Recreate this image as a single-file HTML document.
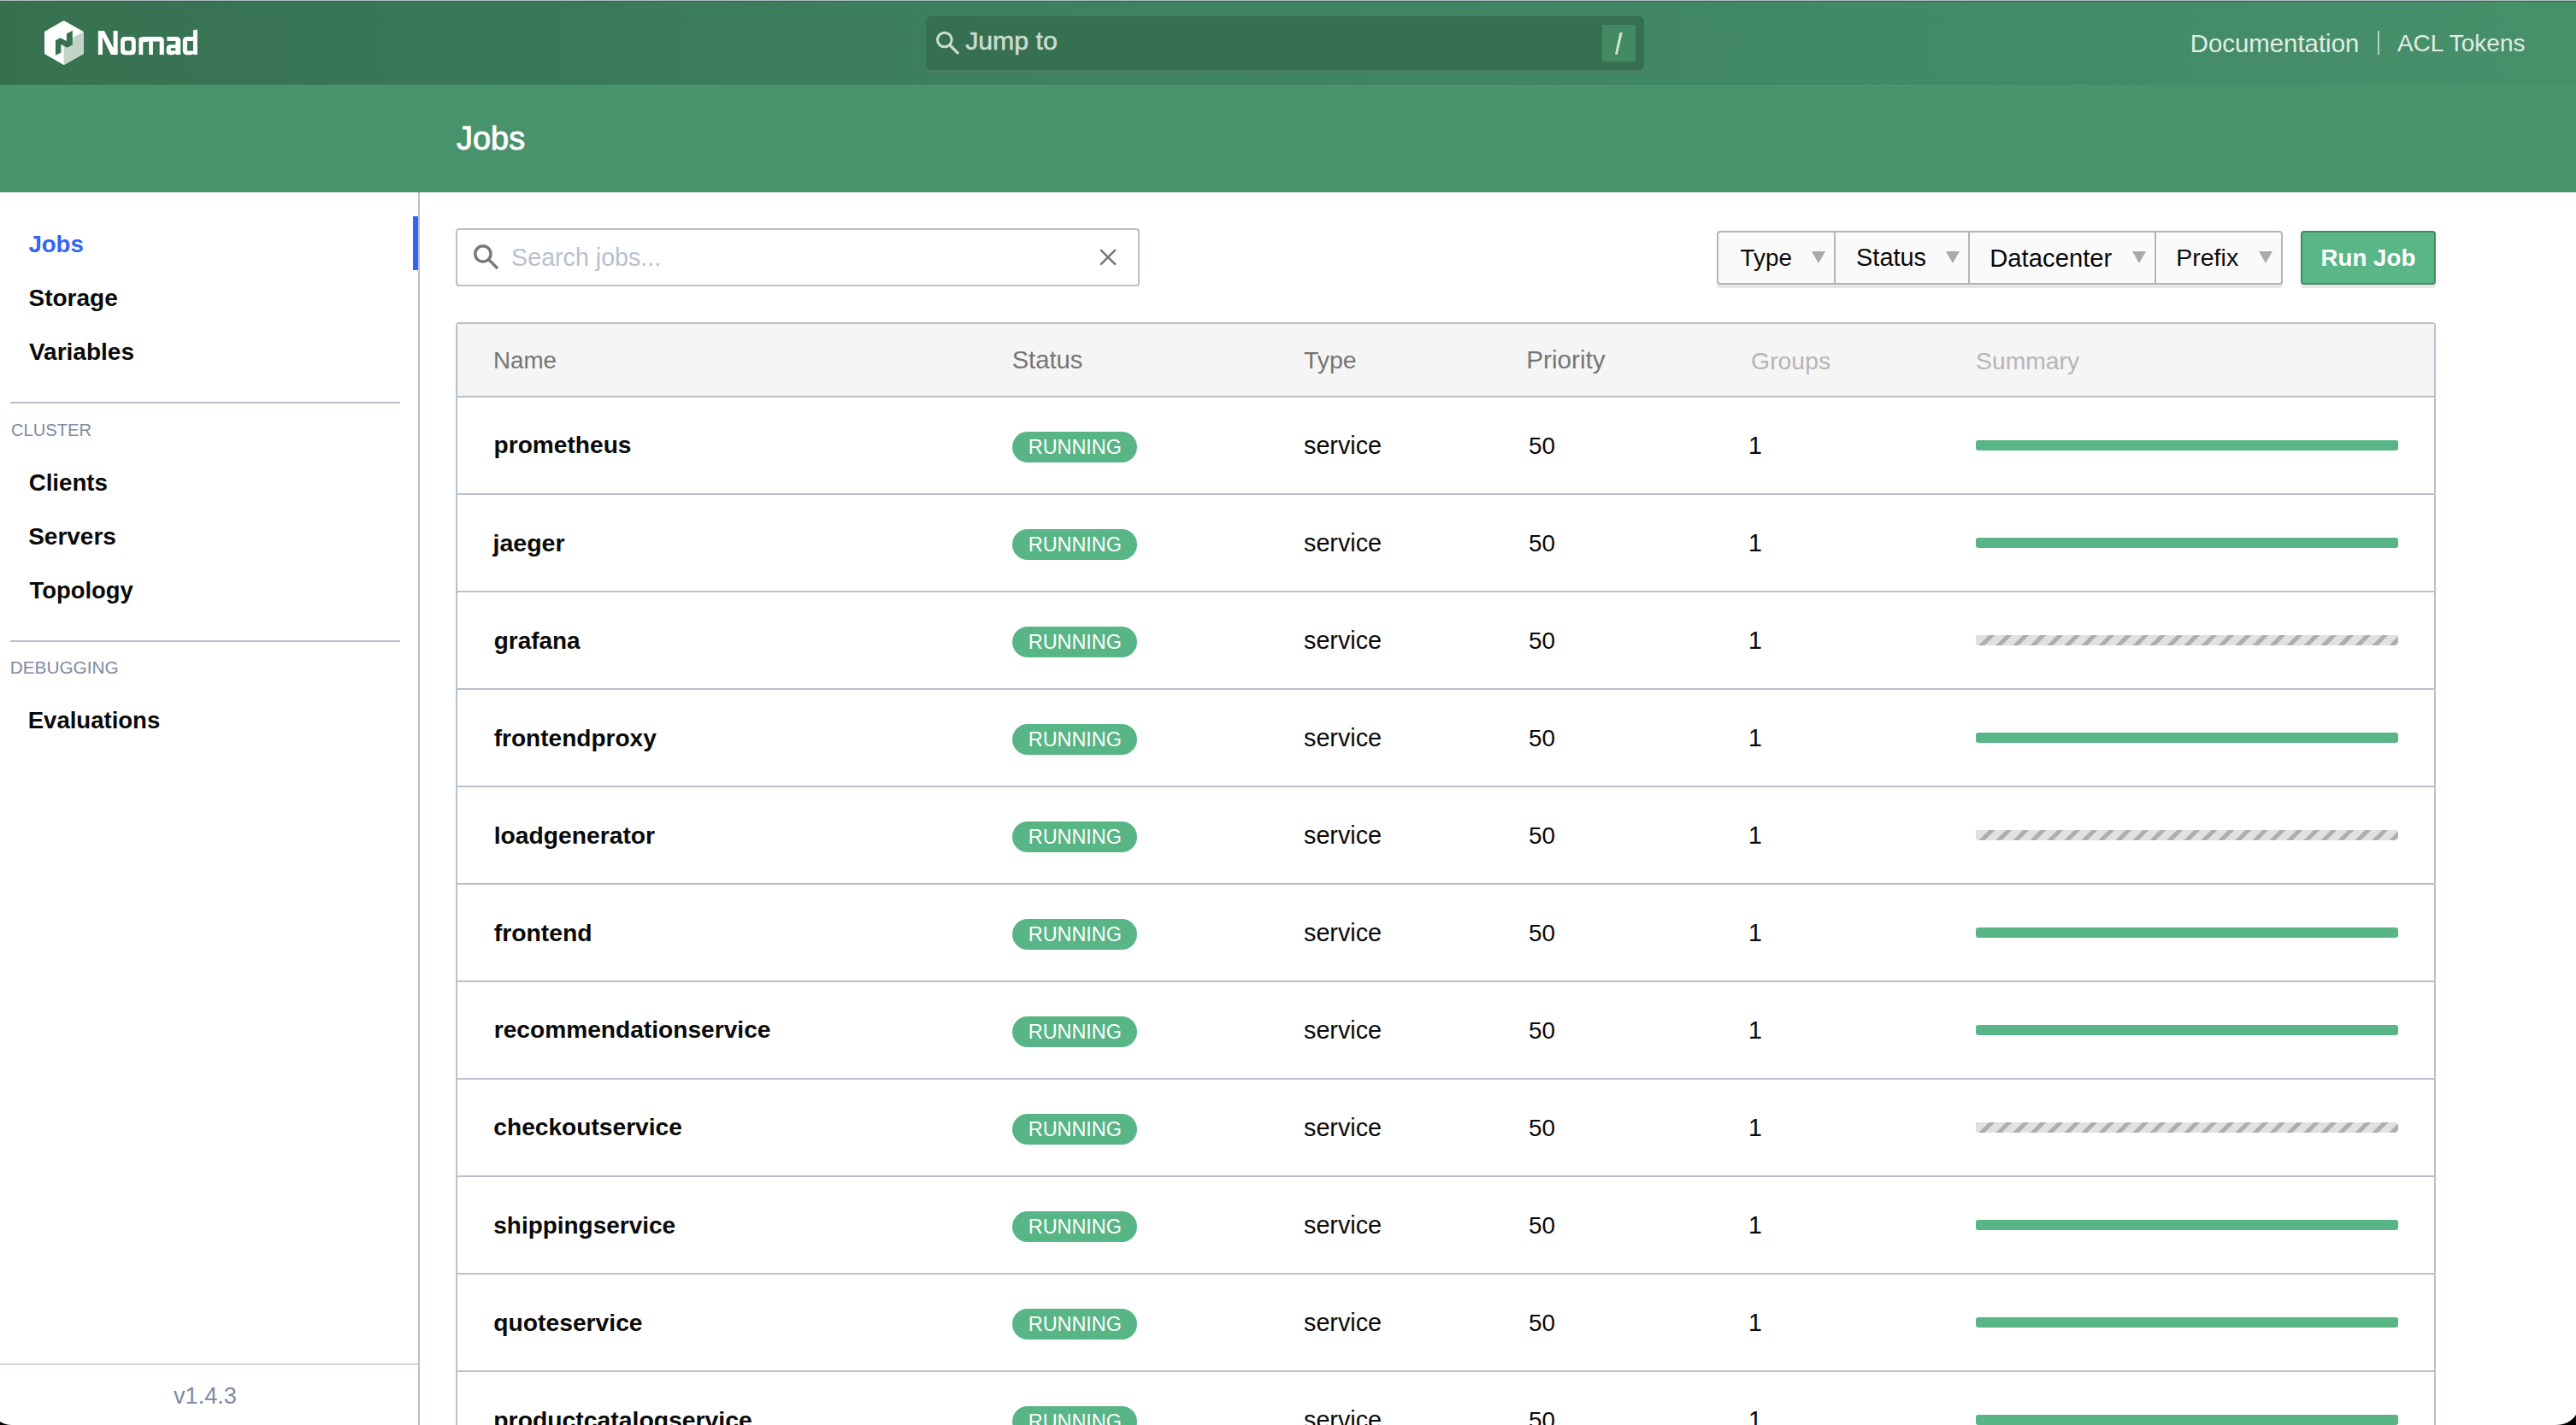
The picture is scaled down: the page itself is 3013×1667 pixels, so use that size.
<!DOCTYPE html>
<html><head><meta charset="utf-8"><title>Jobs - Nomad</title>
<style>
html,body{margin:0;padding:0;}
body{width:3013px;height:1667px;overflow:hidden;position:relative;background:#fff;font-family:"Liberation Sans",sans-serif;}
.t{position:absolute;line-height:1;white-space:nowrap;}
</style></head><body>
<div style="position:absolute;left:0px;top:0px;width:3013px;height:99px;background:linear-gradient(to right,#36704f 0%,#3d8160 40%,#46906a 100%)"></div>
<div style="position:absolute;left:0px;top:98px;width:3013px;height:1px;background:rgba(0,0,0,0.04)"></div>
<div style="position:absolute;left:0px;top:0px;width:3013px;height:1px;background:#aebdc4"></div>
<div style="position:absolute;left:0px;top:1px;width:3013px;height:1px;background:#2f6b4b"></div>
<svg style="position:absolute;left:0;top:0" width="260" height="98" viewBox="0 0 260 98">
<polygon points="74.6,24 97.7,37 97.7,63.1 74.6,76 52,63.1 52,37" fill="#ffffff"/>
<polygon points="74.6,50 97.7,37 97.7,63.1 74.6,76" fill="#c2d4c8"/>
<polygon points="64.9,47.2 70.6,44.2 77.9,48 77.9,39.5 84.8,35.8 84.8,52.5 78.7,55.8 71.4,52.1 71.4,61.5 64.9,64.7" fill="#37714f"/>
</svg>
<svg style="position:absolute;left:0;top:0" width="260" height="98" viewBox="0 0 260 98">
<path fill="#fff" d="M114.85,36.07 L121.89,36.07 L132.56,56.45 L132.56,36.07 L137.66,36.07 L137.66,63.97 L129.9,63.97 L119.95,43.59 L119.95,63.97 L114.85,63.97 Z"/>
<path fill="#fff" fill-rule="evenodd" d="M146,43.1 L153.9,43.1 Q158.77,43.1 158.77,48 L158.77,59.3 Q158.77,64.21 153.9,64.21 L146,64.21 Q141.06,64.21 141.06,59.3 L141.06,48 Q141.06,43.1 146,43.1 Z M148.3,47.47 L151.5,47.47 Q153.9,47.47 153.9,49.9 L153.9,57.2 Q153.9,59.6 151.5,59.6 L148.3,59.6 Q145.9,59.6 145.9,57.2 L145.9,49.9 Q145.9,47.47 148.3,47.47 Z"/>
<path fill="#fff" d="M162.4,44.3 L167.3,43.1 L187.2,43.1 Q191.77,43.1 191.77,47.8 L191.77,63.97 L186.67,63.97 L186.67,48.44 L178.9,48.44 L178.9,63.97 L174.3,63.97 L174.3,48.44 L167.26,49.5 L167.26,63.97 L162.4,63.97 Z"/>
<path fill="#fff" fill-rule="evenodd" d="M195.4,43.1 L206.4,43.1 Q211.17,43.1 211.17,47.9 L211.17,63.97 L205.6,63.97 L205.35,62.8 Q203.8,64.21 200.5,64.21 L199.4,64.21 Q194.67,64.21 194.67,59.5 L194.67,57 Q194.67,52.3 199.4,52.3 L205.35,52.3 L205.35,47.95 L195.4,47.95 Z M199.8,56.2 L205.35,56.2 L205.35,59.35 L199.8,59.35 Z"/>
<path fill="#fff" fill-rule="evenodd" d="M218.7,43.1 L225.97,43.1 L225.97,35.3 L230.83,34.6 L230.83,63.97 L226.2,63.97 L225.97,62.9 Q224.3,64.21 221,64.21 L218.7,64.21 Q213.84,64.21 213.84,59.3 L213.84,48 Q213.84,43.1 218.7,43.1 Z M218.94,47.95 L225.97,47.95 L225.97,59.6 L218.94,59.6 Z"/>
</svg>
<div style="position:absolute;left:1083px;top:19px;width:840px;height:66px;background:#4a7f66;border-radius:6px"></div>
<div style="position:absolute;left:1083px;top:19px;width:840px;height:62.5px;background:#376f52;border-radius:6px"></div>
<svg style="position:absolute;left:1090px;top:30px" width="40" height="40" viewBox="1090 30 40 40">
<circle cx="1104.8" cy="46.5" r="8.3" fill="none" stroke="#c9ddd0" stroke-width="3"/>
<line x1="1110.8" y1="52.5" x2="1121" y2="62.8" stroke="#c9ddd0" stroke-width="3.2"/>
</svg>
<div class="t" style="left:1129.15px;top:33.20px;font-size:30.25px;color:#c9ddd0;font-weight:400;-webkit-text-stroke:0.6px #c9ddd0">Jump to</div>
<div style="position:absolute;left:1874px;top:29px;width:39px;height:43px;background:#438a63"></div>
<svg style="position:absolute;left:1874px;top:29px" width="39" height="43" viewBox="1874 29 39 43">
<polygon points="1894.6,38.06 1897.7,38.06 1891.85,63.87 1889.0,63.87" fill="#d5e3da"/>
</svg>
<div class="t" style="left:2561.67px;top:35.52px;font-size:29.40px;color:#e0ece4;font-weight:400;">Documentation</div>
<div style="position:absolute;left:2781px;top:36px;width:2px;height:28px;background:#b3d3c0"></div>
<div class="t" style="left:2803.90px;top:36.66px;font-size:28.05px;color:#e0ece4;font-weight:400;">ACL Tokens</div>
<div style="position:absolute;left:0px;top:99px;width:3013px;height:126px;background:#48936b"></div>
<div style="position:absolute;left:0px;top:99px;width:3013px;height:1px;background:#4a976d"></div>
<div class="t" style="left:533.97px;top:143.78px;font-size:37.95px;color:#ffffff;font-weight:400;-webkit-text-stroke:0.9px #fff">Jobs</div>
<div style="position:absolute;left:489px;top:225px;width:2px;height:1442px;background:#b9c0cd"></div>
<div class="t" style="left:33.47px;top:272.28px;font-size:27.55px;color:#3264f5;font-weight:700;">Jobs</div>
<div style="position:absolute;left:483px;top:253px;width:6px;height:63px;background:#3264f5"></div>
<div class="t" style="left:33.47px;top:334.90px;font-size:28.00px;color:#0a0a0a;font-weight:700;">Storage</div>
<div class="t" style="left:33.97px;top:397.90px;font-size:28.00px;color:#0a0a0a;font-weight:700;">Variables</div>
<div style="position:absolute;left:12px;top:470px;width:456px;height:2px;background:#b9c0cd"></div>
<div class="t" style="left:13.00px;top:492.55px;font-size:20.15px;color:#7d8ba2;font-weight:400;">CLUSTER</div>
<div class="t" style="left:33.66px;top:550.96px;font-size:27.70px;color:#0a0a0a;font-weight:700;">Clients</div>
<div class="t" style="left:33.16px;top:613.90px;font-size:28.00px;color:#0a0a0a;font-weight:700;">Servers</div>
<div class="t" style="left:34.56px;top:677.39px;font-size:27.42px;color:#0a0a0a;font-weight:700;">Topology</div>
<div style="position:absolute;left:12px;top:749px;width:456px;height:2px;background:#b9c0cd"></div>
<div class="t" style="left:11.76px;top:771.01px;font-size:20.78px;color:#7d8ba2;font-weight:400;">DEBUGGING</div>
<div class="t" style="left:32.76px;top:829.30px;font-size:27.53px;color:#0a0a0a;font-weight:700;">Evaluations</div>
<div style="position:absolute;left:0px;top:1595px;width:489px;height:2px;background:#cfd5e0"></div>
<div class="t" style="left:203.00px;top:1619.34px;font-size:27.12px;color:#7d8ba2;font-weight:400;">v1.4.3</div>
<div style="position:absolute;left:533px;top:267px;width:800px;height:68px;box-sizing:border-box;border:2px solid #b9c0cd;border-radius:4px;background:#fff"></div>
<svg style="position:absolute;left:550px;top:282px" width="40" height="40" viewBox="550 282 40 40">
<circle cx="564.9" cy="296.9" r="9.1" fill="none" stroke="#777" stroke-width="3.4"/>
<line x1="571.6" y1="303.6" x2="582" y2="314" stroke="#777" stroke-width="3.4"/>
</svg>
<div class="t" style="left:598.10px;top:287.35px;font-size:28.65px;color:#b9c0cd;font-weight:400;">Search jobs...</div>
<svg style="position:absolute;left:1280px;top:286px" width="32" height="30" viewBox="1280 286 32 30">
<line x1="1287.9" y1="292.8" x2="1304.1" y2="308.9" stroke="#777" stroke-width="2.6" stroke-linecap="round"/>
<line x1="1304.1" y1="292.8" x2="1287.9" y2="308.9" stroke="#777" stroke-width="2.6" stroke-linecap="round"/>
</svg>
<div style="position:absolute;left:2008px;top:274px;width:662px;height:63px;background:#e6e6e6;border-radius:4px"></div>
<div style="position:absolute;left:2008px;top:270px;width:662px;height:63px;box-sizing:border-box;border:2px solid #b5b5b5;border-radius:4px;background:#fafafa"></div>
<div style="position:absolute;left:2145px;top:272px;width:2px;height:59px;background:#b5b5b5"></div>
<div style="position:absolute;left:2302px;top:272px;width:2px;height:59px;background:#b5b5b5"></div>
<div style="position:absolute;left:2520px;top:272px;width:2px;height:59px;background:#b5b5b5"></div>
<div class="t" style="left:2035.56px;top:287.73px;font-size:27.85px;color:#0a0a0a;font-weight:400;">Type</div>
<div class="t" style="left:2171.10px;top:286.83px;font-size:28.91px;color:#0a0a0a;font-weight:400;">Status</div>
<div class="t" style="left:2327.20px;top:286.52px;font-size:29.28px;color:#0a0a0a;font-weight:400;">Datacenter</div>
<div class="t" style="left:2545.20px;top:287.12px;font-size:28.56px;color:#0a0a0a;font-weight:400;">Prefix</div>
<svg style="position:absolute;left:0;top:0" width="3013" height="340" viewBox="0 0 3013 340"><polygon points="2119,294 2135,294 2127,308" fill="#aaaaaa"/><polygon points="2276,294 2292,294 2284,308" fill="#aaaaaa"/><polygon points="2494,294 2510,294 2502,308" fill="#aaaaaa"/><polygon points="2642,294 2658,294 2650,308" fill="#aaaaaa"/></svg>
<div style="position:absolute;left:2691px;top:274px;width:158px;height:63px;background:#e6e6e6;border-radius:4px"></div>
<div style="position:absolute;left:2691px;top:270px;width:158px;height:63px;box-sizing:border-box;border:2px solid #3f8c60;border-radius:4px;background:#5ab686"></div>
<div class="t" style="left:2714.54px;top:287.85px;font-size:27.71px;color:#ffffff;font-weight:700;">Run Job</div>
<div style="position:absolute;left:533px;top:377px;width:2316px;height:1300px;box-sizing:border-box;border:2px solid #b9c0cd;border-radius:4px;background:#fff"></div>
<div style="position:absolute;left:535px;top:379px;width:2312px;height:84px;background:#f5f5f5"></div>
<div style="position:absolute;left:535px;top:463px;width:2312px;height:2px;background:#b9c0cd"></div>
<div class="t" style="left:576.89px;top:407.98px;font-size:27.79px;color:#757575;font-weight:400;">Name</div>
<div class="t" style="left:1183.66px;top:406.80px;font-size:29.18px;color:#757575;font-weight:400;">Status</div>
<div class="t" style="left:1525.00px;top:407.42px;font-size:28.45px;color:#757575;font-weight:400;">Type</div>
<div class="t" style="left:1785.20px;top:406.36px;font-size:29.71px;color:#757575;font-weight:400;">Priority</div>
<div class="t" style="left:2048.10px;top:407.50px;font-size:28.36px;color:#b5b5b5;font-weight:400;">Groups</div>
<div class="t" style="left:2311.10px;top:407.56px;font-size:28.29px;color:#b5b5b5;font-weight:400;">Summary</div>
<div class="t" style="left:577.54px;top:507.49px;font-size:28.13px;color:#0a0a0a;font-weight:700;">prometheus</div>
<div style="position:absolute;left:1184px;top:505px;width:146px;height:36px;background:#58b585;border-radius:18px"></div>
<div class="t" style="left:1202.76px;top:511.69px;font-size:23.41px;color:#ffffff;font-weight:400;">RUNNING</div>
<div class="t" style="left:1525.00px;top:507.27px;font-size:28.75px;color:#0a0a0a;font-weight:400;">service</div>
<div class="t" style="left:1788.00px;top:508.03px;font-size:27.85px;color:#0a0a0a;font-weight:400;">50</div>
<div class="t" style="left:2044.96px;top:507.39px;font-size:28.60px;color:#0a0a0a;font-weight:400;">1</div>
<div style="position:absolute;left:2311px;top:515px;width:494px;height:12px;border-radius:3px;background:#58b585"></div>
<div style="position:absolute;left:535px;top:577px;width:2312px;height:2px;background:#b9c0cd"></div>
<div class="t" style="left:576.50px;top:621.14px;font-size:28.55px;color:#0a0a0a;font-weight:700;">jaeger</div>
<div style="position:absolute;left:1184px;top:619px;width:146px;height:36px;background:#58b585;border-radius:18px"></div>
<div class="t" style="left:1202.76px;top:625.69px;font-size:23.41px;color:#ffffff;font-weight:400;">RUNNING</div>
<div class="t" style="left:1525.00px;top:621.27px;font-size:28.75px;color:#0a0a0a;font-weight:400;">service</div>
<div class="t" style="left:1788.00px;top:622.03px;font-size:27.85px;color:#0a0a0a;font-weight:400;">50</div>
<div class="t" style="left:2044.96px;top:621.39px;font-size:28.60px;color:#0a0a0a;font-weight:400;">1</div>
<div style="position:absolute;left:2311px;top:629px;width:494px;height:12px;border-radius:3px;background:#58b585"></div>
<div style="position:absolute;left:535px;top:691px;width:2312px;height:2px;background:#b9c0cd"></div>
<div class="t" style="left:577.70px;top:735.64px;font-size:27.95px;color:#0a0a0a;font-weight:700;">grafana</div>
<div style="position:absolute;left:1184px;top:733px;width:146px;height:36px;background:#58b585;border-radius:18px"></div>
<div class="t" style="left:1202.76px;top:739.69px;font-size:23.41px;color:#ffffff;font-weight:400;">RUNNING</div>
<div class="t" style="left:1525.00px;top:735.27px;font-size:28.75px;color:#0a0a0a;font-weight:400;">service</div>
<div class="t" style="left:1788.00px;top:736.03px;font-size:27.85px;color:#0a0a0a;font-weight:400;">50</div>
<div class="t" style="left:2044.96px;top:735.39px;font-size:28.60px;color:#0a0a0a;font-weight:400;">1</div>
<div style="position:absolute;left:2311px;top:743px;width:494px;height:12px;border-radius:3px;overflow:hidden;background:#e1e1e1"><svg width="494" height="12" style="display:block"><polygon points="-4.70,0 2.40,0 -9.60,12 -16.70,12" fill="#aeaeae"/><polygon points="15.30,0 22.40,0 10.40,12 3.30,12" fill="#aeaeae"/><polygon points="35.30,0 42.40,0 30.40,12 23.30,12" fill="#aeaeae"/><polygon points="55.30,0 62.40,0 50.40,12 43.30,12" fill="#aeaeae"/><polygon points="75.30,0 82.40,0 70.40,12 63.30,12" fill="#aeaeae"/><polygon points="95.30,0 102.40,0 90.40,12 83.30,12" fill="#aeaeae"/><polygon points="115.30,0 122.40,0 110.40,12 103.30,12" fill="#aeaeae"/><polygon points="135.30,0 142.40,0 130.40,12 123.30,12" fill="#aeaeae"/><polygon points="155.30,0 162.40,0 150.40,12 143.30,12" fill="#aeaeae"/><polygon points="175.30,0 182.40,0 170.40,12 163.30,12" fill="#aeaeae"/><polygon points="195.30,0 202.40,0 190.40,12 183.30,12" fill="#aeaeae"/><polygon points="215.30,0 222.40,0 210.40,12 203.30,12" fill="#aeaeae"/><polygon points="235.30,0 242.40,0 230.40,12 223.30,12" fill="#aeaeae"/><polygon points="255.30,0 262.40,0 250.40,12 243.30,12" fill="#aeaeae"/><polygon points="275.30,0 282.40,0 270.40,12 263.30,12" fill="#aeaeae"/><polygon points="295.30,0 302.40,0 290.40,12 283.30,12" fill="#aeaeae"/><polygon points="315.30,0 322.40,0 310.40,12 303.30,12" fill="#aeaeae"/><polygon points="335.30,0 342.40,0 330.40,12 323.30,12" fill="#aeaeae"/><polygon points="355.30,0 362.40,0 350.40,12 343.30,12" fill="#aeaeae"/><polygon points="375.30,0 382.40,0 370.40,12 363.30,12" fill="#aeaeae"/><polygon points="395.30,0 402.40,0 390.40,12 383.30,12" fill="#aeaeae"/><polygon points="415.30,0 422.40,0 410.40,12 403.30,12" fill="#aeaeae"/><polygon points="435.30,0 442.40,0 430.40,12 423.30,12" fill="#aeaeae"/><polygon points="455.30,0 462.40,0 450.40,12 443.30,12" fill="#aeaeae"/><polygon points="475.30,0 482.40,0 470.40,12 463.30,12" fill="#aeaeae"/><polygon points="495.30,0 502.40,0 490.40,12 483.30,12" fill="#aeaeae"/><polygon points="515.30,0 522.40,0 510.40,12 503.30,12" fill="#aeaeae"/><polygon points="535.30,0 542.40,0 530.40,12 523.30,12" fill="#aeaeae"/></svg></div>
<div style="position:absolute;left:535px;top:805px;width:2312px;height:2px;background:#b9c0cd"></div>
<div class="t" style="left:577.70px;top:849.56px;font-size:28.05px;color:#0a0a0a;font-weight:700;">frontendproxy</div>
<div style="position:absolute;left:1184px;top:847px;width:146px;height:36px;background:#58b585;border-radius:18px"></div>
<div class="t" style="left:1202.76px;top:853.69px;font-size:23.41px;color:#ffffff;font-weight:400;">RUNNING</div>
<div class="t" style="left:1525.00px;top:849.27px;font-size:28.75px;color:#0a0a0a;font-weight:400;">service</div>
<div class="t" style="left:1788.00px;top:850.03px;font-size:27.85px;color:#0a0a0a;font-weight:400;">50</div>
<div class="t" style="left:2044.96px;top:849.39px;font-size:28.60px;color:#0a0a0a;font-weight:400;">1</div>
<div style="position:absolute;left:2311px;top:857px;width:494px;height:12px;border-radius:3px;background:#58b585"></div>
<div style="position:absolute;left:535px;top:919px;width:2312px;height:2px;background:#b9c0cd"></div>
<div class="t" style="left:577.70px;top:963.39px;font-size:28.25px;color:#0a0a0a;font-weight:700;">loadgenerator</div>
<div style="position:absolute;left:1184px;top:961px;width:146px;height:36px;background:#58b585;border-radius:18px"></div>
<div class="t" style="left:1202.76px;top:967.69px;font-size:23.41px;color:#ffffff;font-weight:400;">RUNNING</div>
<div class="t" style="left:1525.00px;top:963.27px;font-size:28.75px;color:#0a0a0a;font-weight:400;">service</div>
<div class="t" style="left:1788.00px;top:964.03px;font-size:27.85px;color:#0a0a0a;font-weight:400;">50</div>
<div class="t" style="left:2044.96px;top:963.39px;font-size:28.60px;color:#0a0a0a;font-weight:400;">1</div>
<div style="position:absolute;left:2311px;top:971px;width:494px;height:12px;border-radius:3px;overflow:hidden;background:#e1e1e1"><svg width="494" height="12" style="display:block"><polygon points="-4.70,0 2.40,0 -9.60,12 -16.70,12" fill="#aeaeae"/><polygon points="15.30,0 22.40,0 10.40,12 3.30,12" fill="#aeaeae"/><polygon points="35.30,0 42.40,0 30.40,12 23.30,12" fill="#aeaeae"/><polygon points="55.30,0 62.40,0 50.40,12 43.30,12" fill="#aeaeae"/><polygon points="75.30,0 82.40,0 70.40,12 63.30,12" fill="#aeaeae"/><polygon points="95.30,0 102.40,0 90.40,12 83.30,12" fill="#aeaeae"/><polygon points="115.30,0 122.40,0 110.40,12 103.30,12" fill="#aeaeae"/><polygon points="135.30,0 142.40,0 130.40,12 123.30,12" fill="#aeaeae"/><polygon points="155.30,0 162.40,0 150.40,12 143.30,12" fill="#aeaeae"/><polygon points="175.30,0 182.40,0 170.40,12 163.30,12" fill="#aeaeae"/><polygon points="195.30,0 202.40,0 190.40,12 183.30,12" fill="#aeaeae"/><polygon points="215.30,0 222.40,0 210.40,12 203.30,12" fill="#aeaeae"/><polygon points="235.30,0 242.40,0 230.40,12 223.30,12" fill="#aeaeae"/><polygon points="255.30,0 262.40,0 250.40,12 243.30,12" fill="#aeaeae"/><polygon points="275.30,0 282.40,0 270.40,12 263.30,12" fill="#aeaeae"/><polygon points="295.30,0 302.40,0 290.40,12 283.30,12" fill="#aeaeae"/><polygon points="315.30,0 322.40,0 310.40,12 303.30,12" fill="#aeaeae"/><polygon points="335.30,0 342.40,0 330.40,12 323.30,12" fill="#aeaeae"/><polygon points="355.30,0 362.40,0 350.40,12 343.30,12" fill="#aeaeae"/><polygon points="375.30,0 382.40,0 370.40,12 363.30,12" fill="#aeaeae"/><polygon points="395.30,0 402.40,0 390.40,12 383.30,12" fill="#aeaeae"/><polygon points="415.30,0 422.40,0 410.40,12 403.30,12" fill="#aeaeae"/><polygon points="435.30,0 442.40,0 430.40,12 423.30,12" fill="#aeaeae"/><polygon points="455.30,0 462.40,0 450.40,12 443.30,12" fill="#aeaeae"/><polygon points="475.30,0 482.40,0 470.40,12 463.30,12" fill="#aeaeae"/><polygon points="495.30,0 502.40,0 490.40,12 483.30,12" fill="#aeaeae"/><polygon points="515.30,0 522.40,0 510.40,12 503.30,12" fill="#aeaeae"/><polygon points="535.30,0 542.40,0 530.40,12 523.30,12" fill="#aeaeae"/></svg></div>
<div style="position:absolute;left:535px;top:1033px;width:2312px;height:2px;background:#b9c0cd"></div>
<div class="t" style="left:577.70px;top:1077.30px;font-size:28.35px;color:#0a0a0a;font-weight:700;">frontend</div>
<div style="position:absolute;left:1184px;top:1075px;width:146px;height:36px;background:#58b585;border-radius:18px"></div>
<div class="t" style="left:1202.76px;top:1081.69px;font-size:23.41px;color:#ffffff;font-weight:400;">RUNNING</div>
<div class="t" style="left:1525.00px;top:1077.27px;font-size:28.75px;color:#0a0a0a;font-weight:400;">service</div>
<div class="t" style="left:1788.00px;top:1078.03px;font-size:27.85px;color:#0a0a0a;font-weight:400;">50</div>
<div class="t" style="left:2044.96px;top:1077.39px;font-size:28.60px;color:#0a0a0a;font-weight:400;">1</div>
<div style="position:absolute;left:2311px;top:1085px;width:494px;height:12px;border-radius:3px;background:#58b585"></div>
<div style="position:absolute;left:535px;top:1147px;width:2312px;height:2px;background:#b9c0cd"></div>
<div class="t" style="left:577.70px;top:1191.47px;font-size:28.15px;color:#0a0a0a;font-weight:700;">recommendationservice</div>
<div style="position:absolute;left:1184px;top:1189px;width:146px;height:36px;background:#58b585;border-radius:18px"></div>
<div class="t" style="left:1202.76px;top:1195.69px;font-size:23.41px;color:#ffffff;font-weight:400;">RUNNING</div>
<div class="t" style="left:1525.00px;top:1191.27px;font-size:28.75px;color:#0a0a0a;font-weight:400;">service</div>
<div class="t" style="left:1788.00px;top:1192.03px;font-size:27.85px;color:#0a0a0a;font-weight:400;">50</div>
<div class="t" style="left:2044.96px;top:1191.39px;font-size:28.60px;color:#0a0a0a;font-weight:400;">1</div>
<div style="position:absolute;left:2311px;top:1199px;width:494px;height:12px;border-radius:3px;background:#58b585"></div>
<div style="position:absolute;left:535px;top:1261px;width:2312px;height:2px;background:#b9c0cd"></div>
<div class="t" style="left:577.30px;top:1305.47px;font-size:28.15px;color:#0a0a0a;font-weight:700;">checkoutservice</div>
<div style="position:absolute;left:1184px;top:1303px;width:146px;height:36px;background:#58b585;border-radius:18px"></div>
<div class="t" style="left:1202.76px;top:1309.69px;font-size:23.41px;color:#ffffff;font-weight:400;">RUNNING</div>
<div class="t" style="left:1525.00px;top:1305.27px;font-size:28.75px;color:#0a0a0a;font-weight:400;">service</div>
<div class="t" style="left:1788.00px;top:1306.03px;font-size:27.85px;color:#0a0a0a;font-weight:400;">50</div>
<div class="t" style="left:2044.96px;top:1305.39px;font-size:28.60px;color:#0a0a0a;font-weight:400;">1</div>
<div style="position:absolute;left:2311px;top:1313px;width:494px;height:12px;border-radius:3px;overflow:hidden;background:#e1e1e1"><svg width="494" height="12" style="display:block"><polygon points="-4.70,0 2.40,0 -9.60,12 -16.70,12" fill="#aeaeae"/><polygon points="15.30,0 22.40,0 10.40,12 3.30,12" fill="#aeaeae"/><polygon points="35.30,0 42.40,0 30.40,12 23.30,12" fill="#aeaeae"/><polygon points="55.30,0 62.40,0 50.40,12 43.30,12" fill="#aeaeae"/><polygon points="75.30,0 82.40,0 70.40,12 63.30,12" fill="#aeaeae"/><polygon points="95.30,0 102.40,0 90.40,12 83.30,12" fill="#aeaeae"/><polygon points="115.30,0 122.40,0 110.40,12 103.30,12" fill="#aeaeae"/><polygon points="135.30,0 142.40,0 130.40,12 123.30,12" fill="#aeaeae"/><polygon points="155.30,0 162.40,0 150.40,12 143.30,12" fill="#aeaeae"/><polygon points="175.30,0 182.40,0 170.40,12 163.30,12" fill="#aeaeae"/><polygon points="195.30,0 202.40,0 190.40,12 183.30,12" fill="#aeaeae"/><polygon points="215.30,0 222.40,0 210.40,12 203.30,12" fill="#aeaeae"/><polygon points="235.30,0 242.40,0 230.40,12 223.30,12" fill="#aeaeae"/><polygon points="255.30,0 262.40,0 250.40,12 243.30,12" fill="#aeaeae"/><polygon points="275.30,0 282.40,0 270.40,12 263.30,12" fill="#aeaeae"/><polygon points="295.30,0 302.40,0 290.40,12 283.30,12" fill="#aeaeae"/><polygon points="315.30,0 322.40,0 310.40,12 303.30,12" fill="#aeaeae"/><polygon points="335.30,0 342.40,0 330.40,12 323.30,12" fill="#aeaeae"/><polygon points="355.30,0 362.40,0 350.40,12 343.30,12" fill="#aeaeae"/><polygon points="375.30,0 382.40,0 370.40,12 363.30,12" fill="#aeaeae"/><polygon points="395.30,0 402.40,0 390.40,12 383.30,12" fill="#aeaeae"/><polygon points="415.30,0 422.40,0 410.40,12 403.30,12" fill="#aeaeae"/><polygon points="435.30,0 442.40,0 430.40,12 423.30,12" fill="#aeaeae"/><polygon points="455.30,0 462.40,0 450.40,12 443.30,12" fill="#aeaeae"/><polygon points="475.30,0 482.40,0 470.40,12 463.30,12" fill="#aeaeae"/><polygon points="495.30,0 502.40,0 490.40,12 483.30,12" fill="#aeaeae"/><polygon points="515.30,0 522.40,0 510.40,12 503.30,12" fill="#aeaeae"/><polygon points="535.30,0 542.40,0 530.40,12 523.30,12" fill="#aeaeae"/></svg></div>
<div style="position:absolute;left:535px;top:1375px;width:2312px;height:2px;background:#b9c0cd"></div>
<div class="t" style="left:577.30px;top:1419.64px;font-size:27.95px;color:#0a0a0a;font-weight:700;">shippingservice</div>
<div style="position:absolute;left:1184px;top:1417px;width:146px;height:36px;background:#58b585;border-radius:18px"></div>
<div class="t" style="left:1202.76px;top:1423.69px;font-size:23.41px;color:#ffffff;font-weight:400;">RUNNING</div>
<div class="t" style="left:1525.00px;top:1419.27px;font-size:28.75px;color:#0a0a0a;font-weight:400;">service</div>
<div class="t" style="left:1788.00px;top:1420.03px;font-size:27.85px;color:#0a0a0a;font-weight:400;">50</div>
<div class="t" style="left:2044.96px;top:1419.39px;font-size:28.60px;color:#0a0a0a;font-weight:400;">1</div>
<div style="position:absolute;left:2311px;top:1427px;width:494px;height:12px;border-radius:3px;background:#58b585"></div>
<div style="position:absolute;left:535px;top:1489px;width:2312px;height:2px;background:#b9c0cd"></div>
<div class="t" style="left:577.30px;top:1533.39px;font-size:28.25px;color:#0a0a0a;font-weight:700;">quoteservice</div>
<div style="position:absolute;left:1184px;top:1531px;width:146px;height:36px;background:#58b585;border-radius:18px"></div>
<div class="t" style="left:1202.76px;top:1537.69px;font-size:23.41px;color:#ffffff;font-weight:400;">RUNNING</div>
<div class="t" style="left:1525.00px;top:1533.27px;font-size:28.75px;color:#0a0a0a;font-weight:400;">service</div>
<div class="t" style="left:1788.00px;top:1534.03px;font-size:27.85px;color:#0a0a0a;font-weight:400;">50</div>
<div class="t" style="left:2044.96px;top:1533.39px;font-size:28.60px;color:#0a0a0a;font-weight:400;">1</div>
<div style="position:absolute;left:2311px;top:1541px;width:494px;height:12px;border-radius:3px;background:#58b585"></div>
<div style="position:absolute;left:535px;top:1603px;width:2312px;height:2px;background:#b9c0cd"></div>
<div class="t" style="left:577.30px;top:1647.30px;font-size:28.35px;color:#0a0a0a;font-weight:700;">productcatalogservice</div>
<div style="position:absolute;left:1184px;top:1645px;width:146px;height:36px;background:#58b585;border-radius:18px"></div>
<div class="t" style="left:1202.76px;top:1651.69px;font-size:23.41px;color:#ffffff;font-weight:400;">RUNNING</div>
<div class="t" style="left:1525.00px;top:1647.27px;font-size:28.75px;color:#0a0a0a;font-weight:400;">service</div>
<div class="t" style="left:1788.00px;top:1648.03px;font-size:27.85px;color:#0a0a0a;font-weight:400;">50</div>
<div class="t" style="left:2044.96px;top:1647.39px;font-size:28.60px;color:#0a0a0a;font-weight:400;">1</div>
<div style="position:absolute;left:2311px;top:1655px;width:494px;height:12px;border-radius:3px;background:#58b585"></div>
<svg style="position:absolute;left:0;top:1640px" width="40" height="27" viewBox="0 1640 40 27"><path d="M0,1663 Q6,1667 14,1667 L0,1667 Z" fill="#000"/></svg>
<svg style="position:absolute;left:2973px;top:1640px" width="40" height="27" viewBox="2973 1640 40 27"><path d="M3013,1655 Q3005,1667 2989,1667 L3013,1667 Z" fill="#000"/></svg>
</body></html>
